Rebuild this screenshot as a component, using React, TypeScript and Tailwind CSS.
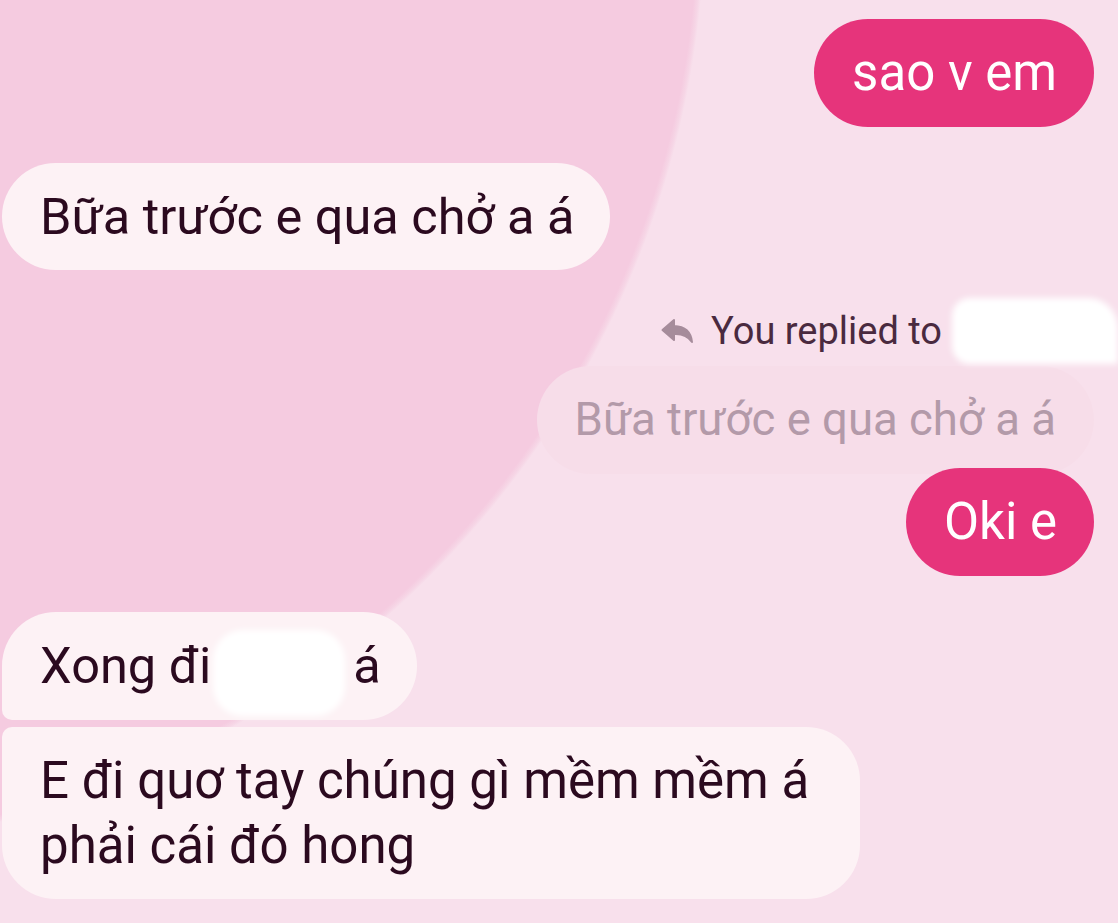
import React from "react";

function Redaction({ className }: { className: string }): React.ReactElement {
  return <span className={`inline-block bg-white blur-[3px] ${className}`} />;
}

function ReplyIcon(): React.ReactElement {
  return (
    <svg width="34" height="26" viewBox="0 0 34 26" className="shrink-0">
      <path
        d="M13 2 L1.5 12 L13 22 L13 16 C21 15.5 27 18 31 24 C30 14 24 8.5 13 8 Z"
        fill="#a68c9b"
        stroke="#a68c9b"
        strokeWidth="2"
        strokeLinejoin="round"
      />
    </svg>
  );
}

export default function App(): React.ReactElement {
  return (
    <div className="h-[923px] w-[1118px] overflow-hidden bg-[#f8e0ec] bg-[radial-gradient(circle_940px_at_-235px_-88px,#f5cbe0_99.2%,#f6d6e6_99.7%,#f8e0ec_100%)] font-['Roboto','Noto_Sans',sans-serif]">
      <div className="flex flex-col pl-[2px] pr-[24px] pt-[19px]">
        {/* sent */}
        <div className="flex h-[108px] items-center self-end rounded-full bg-[#e6347b] pl-[38px] pr-[37px] text-[51px] text-white">
          sao v em
        </div>

        {/* received */}
        <div className="mt-[36px] flex h-[107px] items-center self-start rounded-full bg-[#fdf2f5] pl-[38px] pr-[36px] text-[50.5px] text-[#2b0a1f]">
          Bữa trước e qua chở a á
        </div>

        {/* reply header */}
        <div className="-mr-[24px] mt-[26px] flex h-[70px] items-center justify-end gap-[16px] self-end">
          <ReplyIcon />
          <span className="text-[38px] text-[#4a2a3f]">You replied to</span>
          <Redaction className="ml-[-6px] h-[66px] w-[166px] rounded-l-[18px] rounded-tr-[30px]" />
        </div>

        {/* quoted */}
        <div className="flex h-[108px] items-center self-end rounded-[54px] bg-[#f7dde9] pl-[38px] pr-[38px] text-[45.5px] text-[#b39aa9]">
          Bữa trước e qua chở a á
        </div>

        {/* sent */}
        <div className="-mt-[6px] flex h-[108px] items-center self-end rounded-full bg-[#e6347b] pl-[38px] pr-[37px] text-[51px] text-white">
          Oki e
        </div>

        {/* received group */}
        <div className="mt-[36px] flex h-[108px] items-center self-start rounded-[54px] rounded-bl-[10px] bg-[#fdf2f5] pl-[38px] pr-[36px] text-[50.5px] text-[#2b0a1f]">
          <span>Xong đi</span>
          <Redaction className="ml-[2px] mr-[8px] mt-[14px] h-[86px] w-[132px] rounded-[30px]" />
          <span>á</span>
        </div>
        <div className="mt-[7px] flex w-[858px] flex-col self-start rounded-[54px] rounded-tl-[10px] bg-[#fdf2f5] py-[21px] pl-[38px] pr-[36px] text-[51px] leading-[65px] text-[#2b0a1f]">
          <span>E đi quơ tay chúng gì mềm mềm á</span>
          <span>phải cái đó hong</span>
        </div>
      </div>
    </div>
  );
}
